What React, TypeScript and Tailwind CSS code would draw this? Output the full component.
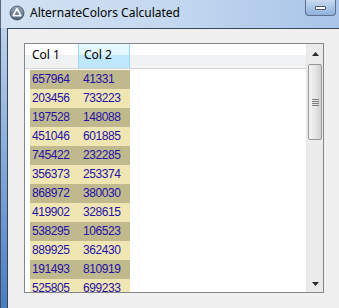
const rows: [string, string][] = [
  ["657964", "41331"],
  ["203456", "733223"],
  ["197528", "148088"],
  ["451046", "601885"],
  ["745422", "232285"],
  ["356373", "253374"],
  ["868972", "380030"],
  ["419902", "328615"],
  ["538295", "106523"],
  ["889925", "362430"],
  ["191493", "810919"],
  ["525805", "699233"],
];

function AppIcon() {
  return (
    <svg width="16" height="16" viewBox="0 0 16 16" className="shrink-0">
      <defs>
        <linearGradient id="ic" x1="0" y1="0" x2="0" y2="1">
          <stop offset="0" stopColor="#9aa9bb" />
          <stop offset="1" stopColor="#4e6079" />
        </linearGradient>
      </defs>
      <circle cx="8" cy="8" r="7" fill="url(#ic)" stroke="#3e4d60" strokeWidth="0.8" />
      <path d="M8 3.6 L12 10.8 H4 Z" fill="none" stroke="#fff" strokeWidth="1.6" strokeLinejoin="round" />
    </svg>
  );
}

function Arrow({ down }: { down?: boolean }) {
  return (
    <svg width="7" height="4" viewBox="0 0 7 4">
      <path d={down ? "M0 0 H7 L3.5 4 Z" : "M3.5 0 L7 4 H0 Z"} fill="#2b2b2b" />
    </svg>
  );
}

export default function App() {
  return (
    <div className="w-[339px] h-[308px] overflow-hidden flex flex-col bg-[#5b87c3] font-['Noto_Sans',sans-serif]">
      {/* Title bar */}
      <div className="h-[28px] shrink-0 flex items-start bg-gradient-to-r from-[#d3e2f3] via-[#c4d8f0] to-[#a8c4e8] border-l border-[#5a6b80]">
        <div className="flex items-center gap-[5px] pl-[8px] pt-[5px]">
          <AppIcon />
          <span className="text-[12px] leading-[16px] text-black">AlternateColors Calculated</span>
        </div>
        <div className="ml-auto mr-[3px] w-[31px] h-[16px] rounded-b-[4px] border border-t-0 border-[#5c6f8c] bg-gradient-to-b from-[#c9daf0] to-[#8fb0dc] flex items-center justify-center">
          <div className="w-[11px] h-[4px] bg-white border border-[#4a5a70] rounded-[1px]" />
        </div>
      </div>

      {/* Frame + client */}
      <div className="flex-1 flex">
        <div className="w-[7px] shrink-0 border-l border-[#3d4c60] bg-gradient-to-b from-[#bcd2ec] to-[#4a7dc2]" />
        <div className="flex-1 border-l border-t border-[#3a4656] bg-[#f0f0f0] pl-[16px] pt-[14px]">
          <div className="w-[300px] h-[250px] border border-[#828790] bg-white flex">
            {/* Grid */}
            <div className="w-[281px] flex flex-col">
              <div className="h-[24px] flex bg-gradient-to-b from-white from-45% to-[#f1f2f4] to-45%">
                <div className="w-[5px]" />
                <div className="w-[48px] pl-[2px] pt-[3px] text-[12px] leading-[16px] text-black">Col 1</div>
                <div className="w-[52px] pl-[5px] pt-[3px] text-[12px] leading-[16px] text-black border-x border-[#96d9f9] bg-gradient-to-b from-[#e3f7ff] from-45% to-[#bee6fd] to-45%">
                  Col 2
                </div>
              </div>
              <div className="h-px bg-[#d5d5d5]" />
              <div className="flex-1 pt-px pl-[5px] overflow-hidden">
                {rows.map(([a, b], i) => (
                  <div
                    key={a}
                    className={`w-[100px] h-[19px] flex text-[12px] tracking-[-0.4px] leading-[19px] text-[#2410a4] font-['Liberation_Sans',sans-serif] ${
                      i % 2 === 0 ? "bg-[#c0b98e]" : "bg-[#f0e6b4]"
                    }`}
                  >
                    <div className="w-[51px] pl-[2px]">{a}</div>
                    <div className="w-[49px] pl-[2px]">{b}</div>
                  </div>
                ))}
              </div>
            </div>

            {/* Scrollbar */}
            <div className="w-[17px] flex flex-col bg-[#ebebeb] border-l border-[#e6e6e6]">
              <div className="h-[20px] flex items-center justify-center">
                <Arrow />
              </div>
              <div className="mx-[1px] h-[76px] rounded-[2px] border border-[#979797] bg-gradient-to-r from-[#f3f3f3] via-[#e6e6e6] to-[#d2d2d2] flex flex-col items-center justify-center gap-[1px]">
                <div className="w-[7px] h-px bg-[#7e7e7e]" />
                <div className="w-[7px] h-px bg-[#7e7e7e]" />
                <div className="w-[7px] h-px bg-[#7e7e7e]" />
                <div className="w-[7px] h-px bg-[#7e7e7e]" />
              </div>
              <div className="flex-1" />
              <div className="h-[17px] flex items-center justify-center">
                <Arrow down />
              </div>
            </div>
          </div>
        </div>
      </div>
    </div>
  );
}
